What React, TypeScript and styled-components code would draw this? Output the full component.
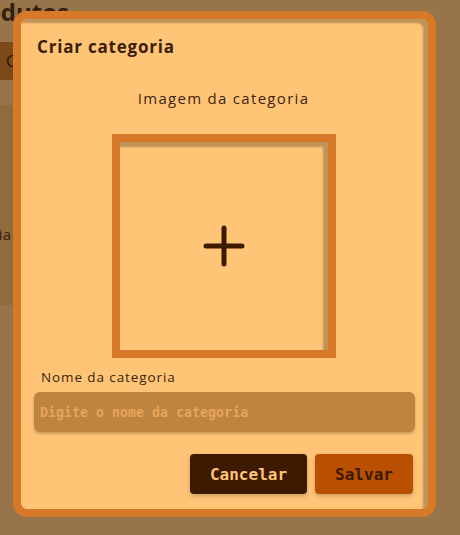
import React from "react";
import styled, { createGlobalStyle } from "styled-components";

const GlobalStyle = createGlobalStyle`
  html, body {
    margin: 0;
    padding: 0;
    background: #98744a;
  }
  * { box-sizing: border-box; }
`;

const Page = styled.div`
  position: relative;
  width: 460px;
  height: 535px;
  overflow: hidden;
  background: #98744a;
  font-family: "Open Sans", "Noto Sans", sans-serif;
`;

const Behind = styled.div`
  display: flex;
  flex-direction: column;
`;

const BgHeading = styled.h1`
  margin: 0 0 0 -40px;
  height: 42px;
  font-size: 24px;
  line-height: 24px;
  font-weight: 700;
  color: #35200c;
  white-space: nowrap;
`;

const BgButton = styled.div`
  height: 38px;
  width: 120px;
  background: #7b4a19;
  color: #2a1505;
  font-size: 16px;
  display: flex;
  align-items: center;
  padding-left: 6px;
`;

const BgCard = styled.div`
  margin-top: 25px;
  height: 200px;
  width: 200px;
  background: #8f6b3e;
  display: flex;
  align-items: center;
  padding-top: 58px;
  color: #35200c;
  font-size: 15px;
  white-space: nowrap;
`;

const BgCardText = styled.span`
  margin-left: -56px;
`;

const Overlay = styled.div`
  position: absolute;
  inset: 0;
  padding: 11px 0 0 13px;
`;

const Dialog = styled.div`
  width: 423px;
  height: 506px;
  border: 8px solid #d67a2a;
  border-radius: 14px;
  background: #ffc476;
  box-shadow: inset -5px 4px 2px rgba(0, 0, 0, 0.25);
  display: flex;
  flex-direction: column;
  padding: 18px 15px 15px 13px;
  color: #3b1d08;
`;

const Title = styled.h2`
  margin: 0 0 0 3px;
  font-size: 17px;
  line-height: 20px;
  font-weight: 700;
  color: #3b1d08;
  letter-spacing: 0.8px;
`;

const SectionLabel = styled.div`
  margin-top: 31px;
  text-align: center;
  font-size: 15px;
  line-height: 20px;
  color: #3d2410;
  letter-spacing: 1.3px;
`;

const ImageBox = styled.button`
  align-self: center;
  margin-top: 26px;
  width: 224px;
  height: 224px;
  border: 8px solid #d67a2a;
  background: #ffc476;
  box-shadow: inset -5px 5px 2px rgba(0, 0, 0, 0.25);
  display: flex;
  align-items: center;
  justify-content: center;
  padding: 0;
  cursor: pointer;
`;

const FieldLabel = styled.label`
  margin: 10px 0 0 7px;
  font-size: 13.5px;
  line-height: 18px;
  color: #3d2410;
  letter-spacing: 0.9px;
`;

const Input = styled.input`
  margin-top: 6px;
  height: 40px;
  width: 381px;
  border: none;
  border-radius: 6px;
  background: #be8540;
  box-shadow: 0 2px 3px rgba(0, 0, 0, 0.22);
  padding: 0 6px;
  font-family: "DejaVu Sans Mono", monospace;
  font-weight: 700;
  font-size: 13.3px;
  color: #3b1d08;
  outline: none;
  &::placeholder {
    color: #e6a55c;
  }
`;

const Actions = styled.div`
  margin-top: 22px;
  display: flex;
  justify-content: flex-end;
  gap: 8px;
`;

const Button = styled.button<{ $variant: "dark" | "orange"; $w: number }>`
  height: 40px;
  width: ${(p) => p.$w}px;
  border: none;
  border-radius: 4px;
  font-family: "DejaVu Sans Mono", monospace;
  font-weight: 700;
  font-size: 16px;
  cursor: pointer;
  box-shadow: 0 2px 4px rgba(0, 0, 0, 0.2);
  background: ${(p) => (p.$variant === "dark" ? "#3d1900" : "#b85000")};
  color: ${(p) => (p.$variant === "dark" ? "#ffc476" : "#3d1900")};
`;

const PlusIcon = () => (
  <svg width="42" height="42" viewBox="0 0 42 42" fill="none">
    <path
      d="M3 21h36M21 3v36"
      stroke="#3d1900"
      strokeWidth="5"
      strokeLinecap="round"
    />
  </svg>
);

export default function App() {
  return (
    <>
      <GlobalStyle />
      <Page>
        <Behind>
          <BgHeading>Produtos</BgHeading>
          <BgButton>C</BgButton>
          <BgCard>
            <BgCardText>Categoria</BgCardText>
          </BgCard>
        </Behind>
        <Overlay>
          <Dialog>
            <Title>Criar categoria</Title>
            <SectionLabel>Imagem da categoria</SectionLabel>
            <ImageBox type="button" aria-label="Adicionar imagem">
              <PlusIcon />
            </ImageBox>
            <FieldLabel htmlFor="nome">Nome da categoria</FieldLabel>
            <Input id="nome" placeholder="Digite o nome da categoria" />
            <Actions>
              <Button $variant="dark" $w={117}>
                Cancelar
              </Button>
              <Button $variant="orange" $w={98}>
                Salvar
              </Button>
            </Actions>
          </Dialog>
        </Overlay>
      </Page>
    </>
  );
}
